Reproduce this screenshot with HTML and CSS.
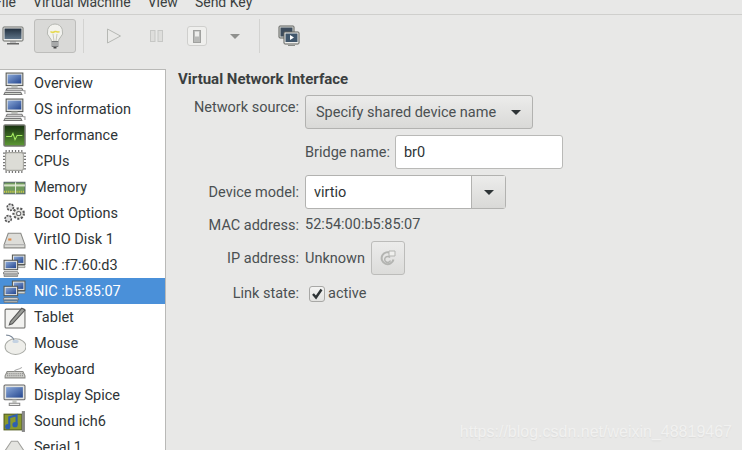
FILE: index.html
```html
<!DOCTYPE html>
<html lang="en">
<head>
  <meta charset="UTF-8">
  <title>Virtual Machine details</title>
  <link rel="stylesheet" href="styles.css">
</head>
<body>
  <svg class="defs" width="0" height="0">
    <defs>
      <linearGradient id="screen" x1="0" y1="0" x2="1" y2="1">
        <stop offset="0" stop-color="#8aa8d8"/>
        <stop offset="1" stop-color="#24468f"/>
      </linearGradient>
      <linearGradient id="darkscreen" x1="0" y1="0" x2="0" y2="1">
        <stop offset="0" stop-color="#22303f"/>
        <stop offset="1" stop-color="#5d7286"/>
      </linearGradient>
      <linearGradient id="scope" x1="0" y1="0" x2="0" y2="1">
        <stop offset="0" stop-color="#16300f"/>
        <stop offset="1" stop-color="#5d9a35"/>
      </linearGradient>
      <symbol id="computer" viewBox="0 0 22 22">
        <rect x="3" y="1" width="16" height="12" fill="#e2e4e2" stroke="#555753"/>
        <rect x="4.500" y="2.500" width="13" height="8.500" fill="url(#screen)"/>
        <path d="M8 13h6v2H8z" fill="#babdb6"/>
        <path d="M4 15.500h14l1 2H3z" fill="#eeeeec" stroke="#777"/>
        <path d="M2 19.500h15l1 2H1z" fill="#d3d7cf" stroke="#777"/>
        <path d="M19 18h2v3" fill="none" stroke="#999"/>
      </symbol>
      <symbol id="nic" viewBox="0 0 22 22">
        <rect x="9" y="1" width="12" height="9" fill="#e2e4e2" stroke="#555753"/>
        <rect x="10.500" y="2.500" width="9" height="6" fill="url(#screen)"/>
        <path d="M10 11h11v2H10z" fill="#d3d7cf" stroke="#777" stroke-width=".6"/>
        <rect x="1" y="6" width="13" height="9" fill="#e2e4e2" stroke="#555753"/>
        <rect x="2.500" y="7.500" width="10" height="6" fill="url(#screen)"/>
        <path d="M1 17h13l1 2H0z" fill="#eeeeec" stroke="#666" stroke-width=".8"/>
        <path d="M1 20h13v1.500H1z" fill="#c6c8c4" stroke="#666" stroke-width=".6"/>
      </symbol>
    </defs>
  </svg>

  <nav class="menubar">
    <span>File</span>
    <span>Virtual Machine</span>
    <span>View</span>
    <span>Send Key</span>
  </nav>

  <div class="toolbar">
    <button class="tool tool-console" aria-label="Console">
      <svg width="22" height="20" viewBox="0 0 22 20">
        <rect x="1" y="1" width="20" height="14" rx="1" fill="#eeeeec" stroke="#6a6c68"/>
        <rect x="2.500" y="2.500" width="17" height="10.500" fill="url(#darkscreen)"/>
        <path d="M8 15h6v1.500H8z" fill="#999"/>
        <path d="M5 17h12v1.500H5z" fill="#666"/>
      </svg>
    </button>
    <button class="tool tool-details" aria-label="Details">
      <svg width="20" height="26" viewBox="0 0 20 26">
        <path d="M10 1a8 8 0 0 0-5 14c1.500 1.500 1.500 3 1.500 3.500h7c0-.5 0-2 1.500-3.500a8 8 0 0 0-5-14z" fill="#f2f2ee" stroke="#b5b7b2"/>
        <path d="M5.500 8.500c2 2 3 .5 4.500 0s3 1.500 4.500 0" fill="none" stroke="#e6d94e" stroke-width="1.600"/>
        <path d="M8 11l1 7m3-7l-1 7" stroke="#c7c7bd" fill="none"/>
        <rect x="6.500" y="18" width="7" height="6" rx="1" fill="#77797a"/>
        <path d="M6.500 20h7m-7 2h7" stroke="#d9dad8"/>
        <path d="M8.500 24h3v1.500h-3z" fill="#444"/>
      </svg>
    </button>
    <span class="sep"></span>
    <button class="tool tool-run" aria-label="Run">
      <svg width="16" height="18" viewBox="0 0 16 18">
        <path d="M1.500 2l13 7-13 7z" fill="#e9e9e7" stroke="#b6b8b4"/>
      </svg>
    </button>
    <button class="tool tool-pause" aria-label="Pause">
      <svg width="14" height="14" viewBox="0 0 14 14">
        <rect x=".5" y="1.500" width="4.500" height="11" fill="#dededc" stroke="#c6c7c5"/>
        <rect x="8" y="1.500" width="4.500" height="11" fill="#dededc" stroke="#c6c7c5"/>
      </svg>
    </button>
    <button class="tool tool-stop" aria-label="Shut down">
      <svg width="8" height="13" viewBox="0 0 8 13">
        <rect x=".5" y=".5" width="7" height="12" fill="#b9bab8" stroke="#a0a19f"/>
        <rect x="2" y="1.500" width="4" height="5" fill="#eeeeec"/>
      </svg>
    </button>
    <span class="arrow arrow-tool"></span>
    <span class="sep sep-right"></span>
    <button class="tool tool-snap" aria-label="Snapshots">
      <svg width="22" height="22" viewBox="0 0 22 22">
        <rect x="1" y="1" width="15" height="12" rx="1" fill="#d8dad6" stroke="#5f615d"/>
        <rect x="2.500" y="2.500" width="12" height="9" fill="#3d4c5c"/>
        <rect x="6" y="7" width="15" height="12" rx="1" fill="#eeeeec" stroke="#5f615d"/>
        <rect x="7.500" y="8.500" width="12" height="8.500" fill="#40566b"/>
        <path d="M12 10l4 2.500-4 2.500z" fill="#fff"/>
        <path d="M10 20h7v1h-7z" fill="#8a8c88"/>
      </svg>
    </button>
  </div>

  <div class="main">
    <aside class="sidebar">
      <div class="hw-row">
        <svg class="hw-icon" viewBox="0 0 22 22"><use href="#computer"/></svg>Overview
      </div>
      <div class="hw-row">
        <svg class="hw-icon" viewBox="0 0 22 22"><use href="#computer"/></svg>OS information
      </div>
      <div class="hw-row">
        <svg class="hw-icon" viewBox="0 0 22 22">
          <rect x="1" y="1" width="20" height="20" rx="1" fill="url(#scope)" stroke="#74776f" stroke-width="1.500"/>
          <path d="M3 12h5l1.500-3 2 6 2-4h5" fill="none" stroke="#a6ec62"/>
        </svg>Performance
      </div>
      <div class="hw-row">
        <svg class="hw-icon" viewBox="0 0 22 22">
          <path d="M3 0v22M6 0v22M9 0v22M12 0v22M15 0v22M18 0v22M0 3h22M0 6h22M0 9h22M0 12h22M0 15h22M0 18h22" stroke="#777" stroke-width="1.200"/>
          <rect x="2.500" y="2.500" width="17" height="17" rx="2" fill="#dcdcd6" stroke="#a5a59f"/>
        </svg>CPUs
      </div>
      <div class="hw-row">
        <svg class="hw-icon" viewBox="0 0 22 22">
          <rect x="1" y="6" width="20" height="11" fill="#6f9a5c" stroke="#566"/>
          <path d="M1 9h20" stroke="#d6e2c8" stroke-width="2"/>
          <path d="M1 15h20" stroke="#d4c94a" stroke-width="2" stroke-dasharray="1 1"/>
          <path d="M12 6v11" stroke="#e4ecdc"/>
        </svg>Memory
      </div>
      <div class="hw-row">
        <svg class="hw-icon" viewBox="0 0 22 22">
          <circle cx="7" cy="5" r="3" fill="#ddd" stroke="#555" stroke-width="1.500" stroke-dasharray="2 1"/>
          <circle cx="5" cy="16" r="3" fill="#ddd" stroke="#555" stroke-width="1.500" stroke-dasharray="2 1"/>
          <circle cx="15" cy="11" r="5" fill="#e4e4e0" stroke="#555" stroke-width="2" stroke-dasharray="2 1.500"/>
          <circle cx="15" cy="11" r="2" fill="#fff" stroke="#666"/>
        </svg>Boot Options
      </div>
      <div class="hw-row">
        <svg class="hw-icon" viewBox="0 0 22 22">
          <path d="M5 5h12l4 11v3H1v-3z" fill="#ddddd9" stroke="#8a8a86"/>
          <path d="M1 16h20" stroke="#aaa"/>
          <rect x="5" y="10" width="3" height="2" fill="#e08a4a"/>
        </svg>VirtIO Disk 1
      </div>
      <div class="hw-row">
        <svg class="hw-icon" viewBox="0 0 22 22"><use href="#nic"/></svg>NIC :f7:60:d3
      </div>
      <div class="hw-row hw-row-selected">
        <svg class="hw-icon" viewBox="0 0 22 22"><use href="#nic"/></svg>NIC :b5:85:07
      </div>
      <div class="hw-row">
        <svg class="hw-icon" viewBox="0 0 22 22">
          <rect x="2" y="3" width="19" height="18" rx="1" fill="#f2f2f0" stroke="#6b6b68"/>
          <path d="M7 15L18 2l3 2L9 17l-3 1z" fill="#9a9c98" stroke="#555"/>
        </svg>Tablet
      </div>
      <div class="hw-row">
        <svg class="hw-icon" viewBox="0 0 22 22">
          <ellipse cx="12" cy="14" rx="10" ry="7.500" fill="#eeeeea" stroke="#a9aba6"/>
          <path d="M3 3c4 0 7 2 8 6" fill="none" stroke="#7d8a9a"/>
          <ellipse cx="12" cy="9" rx="3" ry="1.500" fill="#c4d2e2"/>
        </svg>Mouse
      </div>
      <div class="hw-row">
        <svg class="hw-icon" viewBox="0 0 22 22">
          <path d="M4 13h15l2 4v2H2v-2z" fill="#d0d0cc" stroke="#8a8a86"/>
          <path d="M4 15h15M4 17h15" stroke="#777" stroke-dasharray="1 1"/>
          <path d="M11 13c0-3 4-1 7-4" fill="none" stroke="#aaa"/>
        </svg>Keyboard
      </div>
      <div class="hw-row">
        <svg class="hw-icon" viewBox="0 0 22 22">
          <rect x="1" y="1" width="20" height="14" rx="1" fill="#e2e4e2" stroke="#666"/>
          <rect x="3" y="3" width="16" height="10" fill="url(#screen)"/>
          <path d="M9 15h4v3H9z" fill="#c4c6c2"/>
          <path d="M6 18.500h10v2H6z" fill="#eeeeec" stroke="#888"/>
        </svg>Display Spice
      </div>
      <div class="hw-row">
        <svg class="hw-icon" viewBox="0 0 22 22">
          <rect x="1" y="4" width="17" height="15" fill="#8a9a2c" stroke="#4f5a1c"/>
          <path d="M6 16V7l7-2v9" fill="none" stroke="#2f5fb0" stroke-width="2"/>
          <circle cx="4.500" cy="16" r="2.500" fill="#2f5fb0"/>
          <circle cx="11.500" cy="14" r="2.500" fill="#2f5fb0"/>
          <path d="M19.500 1v20" stroke="#888" stroke-width="3"/>
        </svg>Sound ich6
      </div>
      <div class="hw-row">
        <svg class="hw-icon" viewBox="0 0 22 22">
          <path d="M2 14L8 5h6l6 9v6H2z" fill="#e4e4e0" stroke="#a0a09c"/>
          <path d="M2 14h18" stroke="#a0a09c"/>
        </svg>Serial 1
      </div>
    </aside>

    <section class="detail">
      <h2 class="detail-title">Virtual Network Interface</h2>
      <div class="form-grid">
        <label class="field-label field-label-top">Network source:</label>
        <div class="source-cell">
          <button class="select-btn">Specify shared device name<span class="arrow"></span></button>
          <div class="bridge-row">
            <label class="field-label">Bridge name:</label>
            <input class="text-input" type="text" value="br0">
          </div>
        </div>

        <label class="field-label">Device model:</label>
        <div class="combo">
          <input class="combo-input" type="text" value="virtio">
          <span class="combo-btn"><span class="arrow"></span></span>
        </div>

        <label class="field-label">MAC address:</label>
        <div class="field-value field-value-row">52:54:00:b5:85:07</div>

        <label class="field-label">IP address:</label>
        <div class="ip-cell">
          <span class="field-value">Unknown</span>
          <button class="refresh-btn" aria-label="Refresh">
            <svg width="18" height="18" viewBox="0 0 18 18">
              <path d="M14.500 10.500A6 6 0 1 1 12 4.200" fill="none" stroke="#b3b4b1" stroke-width="2"/>
              <path d="M11 8.500a3 3 0 1 0 .5 3" fill="none" stroke="#b3b4b1" stroke-width="1.500"/>
              <path d="M10 2h6v5h-6z" fill="#efefed" stroke="#b3b4b1"/>
            </svg>
          </button>
        </div>

        <label class="field-label field-label-link">Link state:</label>
        <div class="check-cell">
          <span class="checkbox">
            <svg width="12" height="12" viewBox="0 0 12 12">
              <path d="M2 6l3 3.500L10.500 1.500" fill="none" stroke="#2e3436" stroke-width="2.400"/>
            </svg>
          </span>
          <span class="field-value">active</span>
        </div>
      </div>
    </section>
  </div>

  <div class="watermark">https://blog.csdn.net/weixin_48819467</div>
</body>
</html>
```

FILE: styles.css
```css
html, body {
  margin: 0;
  height: 100%;
  overflow: hidden;
}
body {
  position: relative;
  display: flex;
  flex-direction: column;
  width: 742px;
  height: 450px;
  background: #e8e8e7;
  color: #2e3436;
  font-family: Roboto, sans-serif;
  font-size: 14.500px;
}
button, input {
  font: inherit;
  color: inherit;
}
.defs {
  position: absolute;
}

.menubar {
  display: flex;
  flex: none;
  gap: 17px;
  height: 14px;
  margin-left: -6px;
  overflow: hidden;
  border-bottom: 1px solid #cfcfcd;
  font-size: 14px;
  line-height: 14px;
  color: #3b3f40;
}
.menubar span {
  margin-top: -5px;
}

.toolbar {
  display: flex;
  flex: none;
  align-items: center;
  box-sizing: border-box;
  height: 54px;
  padding: 4px 0 16px;
}
.tool {
  display: flex;
  align-items: center;
  justify-content: center;
  padding: 0;
  background: none;
  border: 1px solid transparent;
  border-radius: 3px;
}
.tool-console {
  width: 26px;
  height: 34px;
}
.tool-details {
  width: 42px;
  height: 34px;
  margin-left: 8px;
  background: #d9d9d7;
  border-color: #bdbdbb;
}
.sep {
  width: 1px;
  height: 34px;
  margin-left: 7px;
  background: #d3d3d1;
}
.tool-run {
  width: 22px;
  height: 26px;
  margin-left: 19px;
}
.tool-pause {
  width: 20px;
  height: 26px;
  margin-left: 22px;
}
.tool-stop {
  width: 20px;
  height: 20px;
  margin-left: 20px;
  background: #efefed;
  border-color: #cfcfcd;
}
.arrow {
  display: inline-block;
  width: 0;
  height: 0;
  border-left: 5px solid transparent;
  border-right: 5px solid transparent;
  border-top: 5px solid #2e3436;
}
.arrow-tool {
  margin-left: 23px;
  border-top-color: #8f908e;
}
.sep-right {
  margin-left: 19px;
}
.tool-snap {
  width: 24px;
  height: 26px;
  margin-left: 17px;
}

.main {
  display: flex;
  flex: 1;
  min-height: 0;
}
.sidebar {
  flex: none;
  box-sizing: border-box;
  width: 166px;
  overflow: hidden;
  background: #fff;
  border-top: 1px solid #b9b9b7;
  border-right: 1px solid #b9b9b7;
}
.hw-row {
  display: flex;
  align-items: center;
  gap: 8px;
  box-sizing: border-box;
  height: 26px;
  padding-left: 3px;
  color: #2e3436;
}
.hw-row-selected {
  background: #4a90d9;
  color: #fff;
}
.hw-icon {
  flex: none;
  width: 23px;
  height: 23px;
}

.detail {
  flex: 1;
  padding: 0 0 0 12px;
}
.detail-title {
  margin: 0 0 6px;
  font-size: 15px;
  font-weight: 700;
  line-height: 20px;
  color: #3b3f40;
}
.form-grid {
  display: grid;
  grid-template-columns: 121px auto;
  justify-content: start;
  column-gap: 6px;
  row-gap: 6px;
  align-items: center;
}
.field-label {
  justify-self: end;
  color: #4b5052;
  white-space: nowrap;
}
.field-label-top {
  align-self: start;
  padding-top: 4px;
}
.field-label-link {
  padding-top: 3px;
}
.field-value {
  color: #4b5052;
}
.field-value-row {
  line-height: 20px;
}
.source-cell {
  display: flex;
  flex-direction: column;
  gap: 6px;
}
.select-btn {
  display: flex;
  align-items: center;
  justify-content: space-between;
  box-sizing: border-box;
  width: 228px;
  height: 34px;
  padding: 0 11px 0 10px;
  background: linear-gradient(#ececeb, #d9d9d7);
  border: 1px solid #b2b2b0;
  border-radius: 3px;
  color: #4b5052;
}
.bridge-row {
  display: flex;
  align-items: center;
  gap: 5px;
}
.text-input {
  box-sizing: border-box;
  width: 168px;
  height: 34px;
  padding: 0 8px;
  background: #fff;
  border: 1px solid #b9b9b7;
  border-radius: 3px;
}
.combo {
  display: flex;
  width: 201px;
  height: 34px;
  box-sizing: border-box;
  background: #fff;
  border: 1px solid #b2b2b0;
  border-radius: 3px;
}
.combo-input {
  flex: 1;
  min-width: 0;
  padding: 0 8px;
  background: none;
  border: 0;
}
.combo-btn {
  display: flex;
  flex: none;
  align-items: center;
  justify-content: center;
  width: 33px;
  background: linear-gradient(#ececeb, #d9d9d7);
  border-left: 1px solid #b2b2b0;
}
.ip-cell {
  display: flex;
  align-items: center;
  gap: 6px;
}
.refresh-btn {
  display: flex;
  align-items: center;
  justify-content: center;
  box-sizing: border-box;
  width: 34px;
  height: 34px;
  padding: 0;
  background: linear-gradient(#ececeb, #dcdcda);
  border: 1px solid #bcbcba;
  border-radius: 3px;
}
.check-cell {
  display: flex;
  align-items: center;
  gap: 3px;
  padding: 4px 0 0 4px;
}
.checkbox {
  display: flex;
  align-items: center;
  justify-content: center;
  box-sizing: border-box;
  width: 16px;
  height: 16px;
  background: linear-gradient(#f4f4f3, #e2e2e0);
  border: 1px solid #a8a8a6;
  border-radius: 3px;
}

.watermark {
  position: absolute;
  right: 10px;
  bottom: 9px;
  font-family: "Liberation Sans", sans-serif;
  font-size: 16px;
  color: #f1f1f0;
  text-shadow: 0 1px 1px #dcdcdb;
}
```
